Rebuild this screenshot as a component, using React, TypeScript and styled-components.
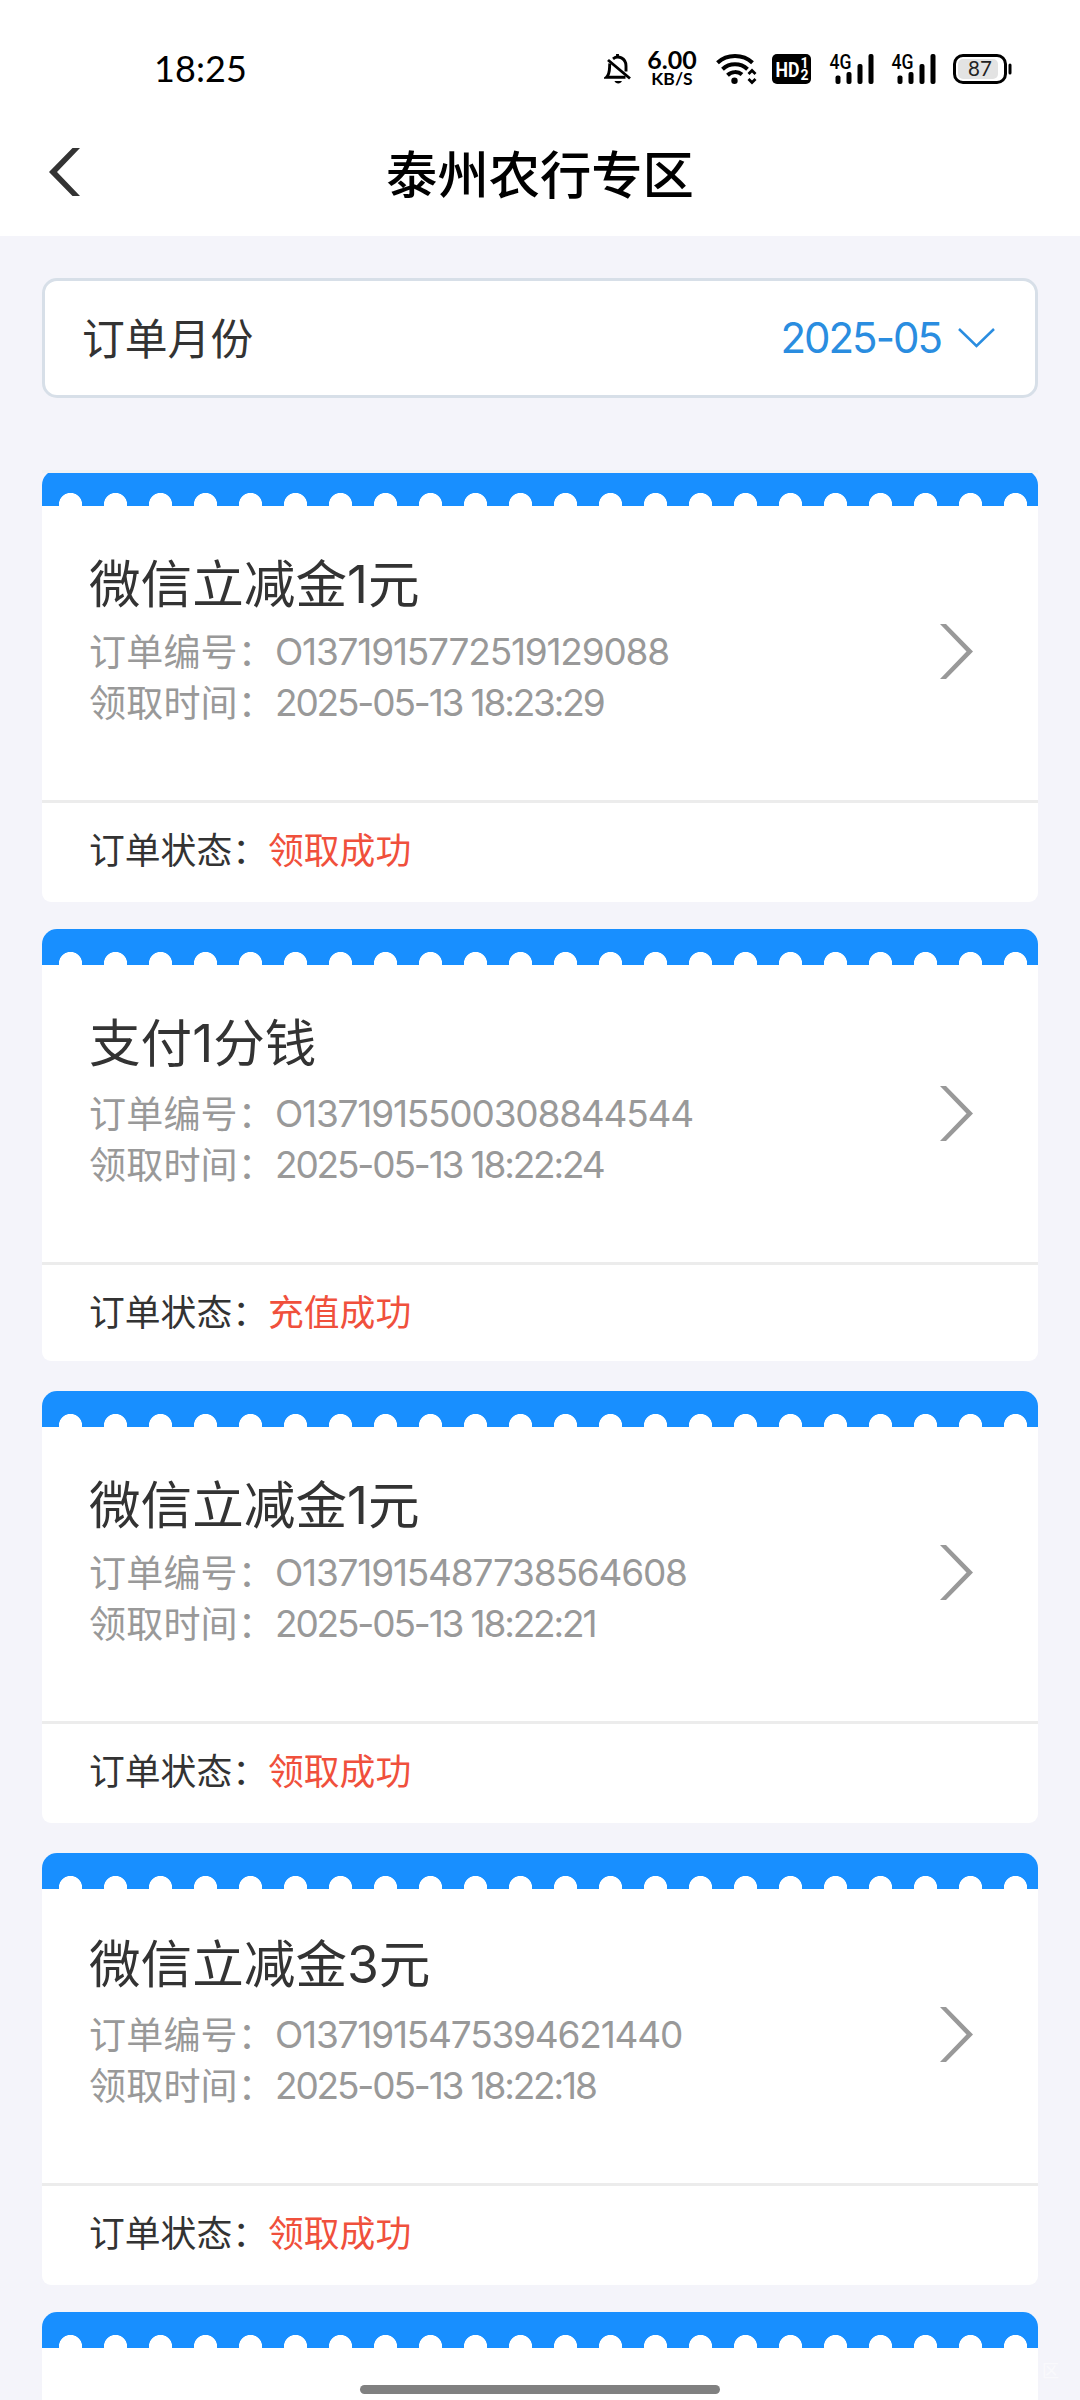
import React from "react";
import styled, { createGlobalStyle } from "styled-components";

const cjk = `"Noto Sans CJK SC", sans-serif`;
const latin = `Inter, "Noto Sans CJK SC", sans-serif`;

const GlobalStyle = createGlobalStyle`
  * { box-sizing: border-box; }
  body { margin: 0; background: #f4f4fa; font-family: ${cjk}; }
`;

const Screen = styled.div`
  position: relative;
  width: 1080px;
  height: 2400px;
  overflow: hidden;
  background: #f4f4fa;
`;

const Top = styled.header`
  height: 236px;
  background: #fff;
`;

const StatusBar = styled.div`
  height: 138px;
  padding: 0 67px 0 154px;
  display: flex;
  align-items: center;
  justify-content: space-between;
  color: #000;
`;

const Clock = styled.span`
  font: 400 36px/44px Lato, sans-serif;
  letter-spacing: 0.1px;
  margin-top: -2px;
`;

const StatusIcons = styled.div`
  display: flex;
  align-items: center;
  height: 40px;
`;

const Glyph = styled.svg<{ $gap?: number }>`
  display: block;
  flex: none;
  margin-left: ${(p) => p.$gap ?? 0}px;
`;

const Speed = styled.div`
  width: 52px;
  margin-left: 14px;
  display: flex;
  flex-direction: column;
  align-items: center;
  font-family: Lato, sans-serif;
`;

const SpeedValue = styled.span`
  font-size: 25px;
  font-weight: 700;
  line-height: 20px;
`;

const SpeedUnit = styled.span`
  font-size: 17.5px;
  font-weight: 700;
  line-height: 20px;
`;

const NavBar = styled.div`
  height: 98px;
  padding: 10px 48px 24px;
  display: grid;
  grid-template-columns: 40px 1fr 40px;
  align-items: start;
`;

const Title = styled.h1`
  margin: -6px 0 0;
  font-size: 51.3px;
  font-weight: 500;
  line-height: 60px;
  text-align: center;
  color: #000;
`;

const MonthPicker = styled.div`
  height: 120px;
  margin: 42px 42px 72px;
  padding: 0 40px 0 37px;
  display: flex;
  align-items: center;
  border: 3px solid #d7dfe8;
  border-radius: 15px;
  background: #fff;
`;

const PickerLabel = styled.span`
  flex: 1;
  margin-top: -5px;
  font-size: 42.8px;
  line-height: 60px;
  color: #333;
`;

const PickerValue = styled.span`
  font: 400 42px/60px ${latin};
  letter-spacing: -2px;
  color: #2a8de0;
`;

const List = styled.main`
  height: 1930px;
  margin: 0 42px;
  overflow: hidden;
  border-top: 3px solid #eff2f5;
`;

const Card = styled.section<{ $height: number; $gap: number }>`
  height: ${(p) => p.$height}px;
  margin-bottom: ${(p) => p.$gap}px;
  display: flex;
  flex-direction: column;
  border-radius: 15px 15px 9px 9px;
  overflow: hidden;
  background: #fff;

  &:first-child {
    margin-top: -3px;
  }
`;

const Perforation = styled.div`
  flex: none;
  height: 36px;
  background:
    radial-gradient(circle at 22.5px 34.5px, #fff 11.2px, transparent 11.9px) 6px 0 / 45px 36px repeat-x,
    #188fff;
`;

const Body = styled.div<{ $height: number }>`
  flex: none;
  height: ${(p) => p.$height}px;
  padding: 0 63px 0 47px;
  display: flex;
  border-bottom: 3px solid #ececec;
`;

const Info = styled.div<{ $top: number }>`
  flex: 1;
  padding-top: ${(p) => p.$top}px;
`;

const ProductName = styled.h2<{ $gap: number }>`
  margin: 0 0 ${(p) => p.$gap}px;
  font: 400 51.6px/60px ${latin};
  color: #333;
`;

const Field = styled.div`
  display: flex;
  font-size: 37px;
  line-height: 51px;
  color: #999;
`;

const FieldLabel = styled.span`
  width: 186px;
  margin-top: -1px;
  letter-spacing: 0.2px;
`;

const FieldValue = styled.span<{ $tracking: number }>`
  font-family: ${latin};
  font-weight: 400;
  letter-spacing: ${(p) => p.$tracking}px;
`;

const ArrowSlot = styled.div<{ $top: number }>`
  padding-top: ${(p) => p.$top}px;
`;

const Status = styled.div`
  height: 94px;
  padding-left: 47px;
  font-size: 35.8px;
  line-height: 90px;
  color: #333;
`;

const StatusText = styled.span`
  color: #f0503c;
`;

const HomeIndicator = styled.div`
  position: absolute;
  left: 360px;
  top: 2385px;
  width: 360px;
  height: 9px;
  border-radius: 5px;
  background: #808080;
`;

const Watermark = styled.span`
  position: absolute;
  right: 21px;
  bottom: 18px;
  font-size: 17px;
  line-height: 24px;
  color: rgba(255, 255, 255, 0.55);
`;

const MuteBell = () => (
  <Glyph width="28" height="32" viewBox="0 0 28 32" fill="none" stroke="#000" strokeWidth="2.9">
    <path d="M9 5.800C14 1.800 22 5 22 13v5.500M5.800 10.500C5.300 15 6.300 20.500 2.500 24.200H21.500" />
    <path d="M4 7l22 18.500" />
    <path d="M13.500 1v3" />
    <path d="M10.500 28h7.400c-.8 3.200-6.600 3.200-7.400 0z" fill="#000" stroke="none" />
  </Glyph>
);

const Wifi = () => (
  <Glyph $gap={18} width="42" height="32" viewBox="0 0 42 32" fill="none" stroke="#000" strokeWidth="4">
    <path d="M1.500 9.800C11 .800 27 .800 36.500 9.800" />
    <path d="M6.500 16.200c7-6.600 18-6.600 25 0" />
    <path d="M11.500 22.200c4.200-4 10.500-4 14.500-.6" />
    <circle cx="18.500" cy="27.700" r="3.200" fill="#000" stroke="none" />
    <path d="M32.500 21l3.500-3.500 3.500 3.500M32.500 26l3.500 3.500L39.500 26" strokeWidth="2.800" />
  </Glyph>
);

const HdBadge = () => (
  <Glyph $gap={14} width="40" height="30" viewBox="0 0 40 30">
    <rect width="39" height="30" rx="5" fill="#000" />
    <text x="3.500" y="22.500" fill="#fff" fontFamily="Roboto, sans-serif" fontWeight="700" fontSize="21" textLength="24" lengthAdjust="spacingAndGlyphs">HD</text>
    <text x="28.500" y="14" fill="#fff" fontFamily="Roboto, sans-serif" fontWeight="700" fontSize="14">1</text>
    <text x="28.500" y="26" fill="#fff" fontFamily="Roboto, sans-serif" fontWeight="700" fontSize="14">2</text>
  </Glyph>
);

const Signal = ({ gap }: { gap: number }) => (
  <Glyph $gap={gap} width="46" height="42" viewBox="0 -5 46 42">
    <text x="0.500" y="15.500" fontFamily="Roboto, sans-serif" fontWeight="500" fontSize="19.500" textLength="22" lengthAdjust="spacingAndGlyphs">4G</text>
    <rect x="6.500" y="22.500" width="5" height="8.500" rx="2" />
    <rect x="17.500" y="19" width="5" height="12" rx="2" />
    <rect x="28.500" y="11" width="5" height="20" rx="2" />
    <rect x="39.500" y="1" width="5" height="30" rx="2" />
  </Glyph>
);

const Battery = () => (
  <Glyph $gap={16} width="60" height="32" viewBox="0 0 60 32">
    <rect x="1.500" y="2.500" width="51" height="27" rx="8.500" fill="#fff" stroke="#000" strokeWidth="3" />
    <rect x="5" y="6" width="40" height="20" rx="5" fill="#e3e3e3" />
    <rect x="55.500" y="10.500" width="3" height="11" rx="1.500" />
    <text x="27" y="23" textAnchor="middle" fontFamily="Lato, sans-serif" fontWeight="400" fontSize="20.500" fill="#222">87</text>
  </Glyph>
);

const BackIcon = () => (
  <Glyph width="34" height="48" viewBox="0 0 34 48">
    <path d="M24.500 0H32L9 24l23 24h-7.500L1 24z" fill="#333" />
  </Glyph>
);

const DownIcon = () => (
  <Glyph $gap={17} width="37" height="20" viewBox="0 0 37 20" fill="none" stroke="#2a8de0" strokeWidth="2.500">
    <path d="M1 1l17.500 17L36 1" />
  </Glyph>
);

const RightIcon = () => (
  <Glyph width="35" height="55" viewBox="0 0 35 55">
    <path d="M0 0h6l27 27.500L6 55H0l26.500-27.500z" fill="#999" />
  </Glyph>
);

type Order = {
  name: string;
  id: string;
  time: string;
  status: string;
  gap: number;
  body: number;
  top: number;
  nameGap: number;
  arrow: number;
};

const orders: Order[] = [
  { name: "微信立减金1元", id: "O1371915772519129088", time: "2025-05-13 18:23:29", status: "领取成功", gap: 27, body: 297, top: 48, nameGap: 12, arrow: 118 },
  { name: "支付1分钱", id: "O1371915500308844544", time: "2025-05-13 18:22:24", status: "充值成功", gap: 30, body: 300, top: 48, nameGap: 15, arrow: 121 },
  { name: "微信立减金1元", id: "O1371915487738564608", time: "2025-05-13 18:22:21", status: "领取成功", gap: 30, body: 297, top: 48, nameGap: 12, arrow: 118 },
  { name: "微信立减金3元", id: "O1371915475394621440", time: "2025-05-13 18:22:18", status: "领取成功", gap: 27, body: 297, top: 45, nameGap: 15, arrow: 118 },
];

const OrderCard = ({ order }: { order: Order }) => (
  <Card $height={432} $gap={order.gap}>
    <Perforation />
    <Body $height={order.body}>
      <Info $top={order.top}>
        <ProductName $gap={order.nameGap}>{order.name}</ProductName>
        <Field>
          <FieldLabel>订单编号：</FieldLabel>
          <FieldValue $tracking={-1.2}>{order.id}</FieldValue>
        </Field>
        <Field>
          <FieldLabel>领取时间：</FieldLabel>
          <FieldValue $tracking={-2.15}>{order.time}</FieldValue>
        </Field>
      </Info>
      <ArrowSlot $top={order.arrow}>
        <RightIcon />
      </ArrowSlot>
    </Body>
    <Status>
      订单状态：<StatusText>{order.status}</StatusText>
    </Status>
  </Card>
);

export default function App() {
  return (
    <Screen>
      <GlobalStyle />
      <Top>
        <StatusBar>
          <Clock>18:25</Clock>
          <StatusIcons>
            <MuteBell />
            <Speed>
              <SpeedValue>6.00</SpeedValue>
              <SpeedUnit>KB/S</SpeedUnit>
            </Speed>
            <Wifi />
            <HdBadge />
            <Signal gap={17} />
            <Signal gap={16} />
            <Battery />
          </StatusIcons>
        </StatusBar>
        <NavBar>
          <BackIcon />
          <Title>泰州农行专区</Title>
        </NavBar>
      </Top>
      <MonthPicker>
        <PickerLabel>订单月份</PickerLabel>
        <PickerValue>2025-05</PickerValue>
        <DownIcon />
      </MonthPicker>
      <List>
        {orders.map((order) => (
          <OrderCard key={order.id} order={order} />
        ))}
        <Card $height={200} $gap={0}>
          <Perforation />
        </Card>
      </List>
      <Watermark>区</Watermark>
      <HomeIndicator />
    </Screen>
  );
}
